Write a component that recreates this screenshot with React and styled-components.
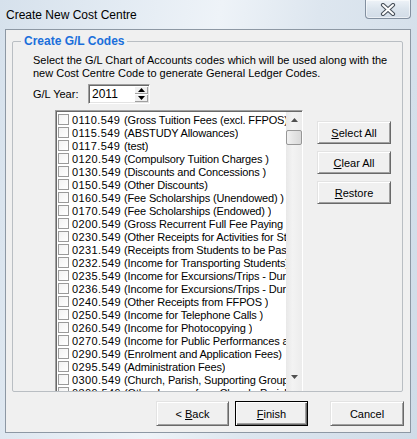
import React from 'react';
import styled, { createGlobalStyle } from 'styled-components';

const Global = createGlobalStyle`
  html, body { margin: 0; padding: 0; }
  body { width: 417px; height: 439px; overflow: hidden; background: #dfe7ef; }
`;

const Window = styled.div`
  width: 417px;
  height: 439px;
  box-sizing: border-box;
  padding: 0 6px 6px 5px;
  display: flex;
  flex-direction: column;
  background: linear-gradient(100deg, #d6e1ec 0%, #e3ebf3 25%, #eef3f8 45%, #dde6ef 65%, #d0dce8 100%);
  font-family: "Liberation Sans", Arial, sans-serif;
`;

const TitleBar = styled.div`
  height: 29px;
  flex: none;
  display: flex;
  align-items: flex-start;
`;

const Title = styled.div`
  margin: 7px 0 0 1px;
  font: 12px/16px "Liberation Sans", Arial, sans-serif;
  color: #000;
`;

const CloseButton = styled.div`
  margin-left: auto;
  width: 46px;
  height: 19px;
  box-sizing: border-box;
  border: 1px solid #8390a0;
  border-top: none;
  border-radius: 0 0 4px 4px;
  background: linear-gradient(#eef3f8, #dbe4ed 50%, #d2dce7);
  box-shadow: inset 0 0 0 1px rgba(255, 255, 255, 0.55);
  display: flex;
  align-items: center;
  justify-content: center;
`;

const Client = styled.div`
  flex: 1;
  min-height: 0;
  display: flex;
  flex-direction: column;
  background: #f0f0f0;
  border: 1px solid #8d98a4;
`;

const Group = styled.section`
  position: relative;
  flex: none;
  margin: 11px 0 0 6px;
  width: 391px;
  height: 351px;
  box-sizing: border-box;
  border: 1px solid #b9bec3;
  border-radius: 2px;
  display: flex;
  flex-direction: column;
`;

const Legend = styled.h2`
  position: absolute;
  top: -8px;
  left: 8px;
  margin: 0;
  padding: 0 3px;
  background: #f0f0f0;
  font: bold 12px/14px "Liberation Sans", Arial, sans-serif;
  color: #1b6fdb;
`;

const GroupBody = styled.div`
  flex: 1;
  min-height: 0;
  display: flex;
  flex-direction: column;
  padding: 12px 0 0 20px;
  overflow: hidden;
`;

const Description = styled.div`
  font-size: 11px;
  line-height: 13px;
  color: #000;
`;

const YearRow = styled.div`
  display: flex;
  align-items: center;
  margin-top: 4px;
  height: 20px;
  font-size: 11px;
`;

const YearLabel = styled.span`
  width: 55px;
`;

const Spin = styled.div`
  width: 62px;
  height: 20px;
  box-sizing: border-box;
  display: flex;
  background: #fff;
  border: 1px solid;
  border-color: #a0a0a0 #fff #fff #a0a0a0;
  box-shadow: inset 1px 1px #696969, inset -1px -1px #e3e3e3;
`;

const SpinValue = styled.span`
  flex: 1;
  padding: 3px 0 0 3px;
  font-size: 12px;
  line-height: 13px;
`;

const SpinButtons = styled.div`
  width: 14px;
  margin: 1px 1px 1px 0;
  display: flex;
  flex-direction: column;
`;

const SpinArrow = styled.div`
  flex: 1;
  display: flex;
  align-items: center;
  justify-content: center;
  background: #f0f0f0;
  box-shadow: inset 1px 1px #fff, inset -1px -1px #a0a0a0;
`;

const ListRow = styled.div`
  flex: 1;
  min-height: 0;
  display: flex;
  margin-top: 6px;
`;

const ListBox = styled.div`
  width: 248px;
  margin-left: 22px;
  box-sizing: border-box;
  display: flex;
  background: #fff;
  border: 1px solid;
  border-color: #a0a0a0 #fff transparent #a0a0a0;
  border-bottom: none;
  padding: 1px 0 0 1px;
  box-shadow: inset 1px 1px #696969;
  overflow: hidden;
`;

const Items = styled.div`
  flex: 1;
  min-width: 0;
  padding: 1px 0 0 1px;
  overflow: hidden;
`;

const Item = styled.div`
  height: 13px;
  display: flex;
  align-items: center;
  white-space: nowrap;
  font-size: 11px;
  color: #000;
`;

const Check = styled.span`
  flex: none;
  width: 11px;
  height: 11px;
  box-sizing: border-box;
  margin-right: 3px;
  border: 1px solid #9a9a9a;
  background: linear-gradient(135deg, #f2f2f2, #fff);
`;

const Code = styled.span`
  flex: none;
  width: 52px;
  letter-spacing: 0.4px;
`;

const Desc = styled.span`
  overflow: hidden;
  letter-spacing: -0.15px;
`;

const ScrollBar = styled.div`
  flex: none;
  width: 16px;
  display: flex;
  flex-direction: column;
  padding-bottom: 5px;
  background: linear-gradient(to right, #e8e8e8, #f3f3f3 40%, #ececec);
`;

const ScrollArrow = styled.div`
  height: 17px;
  flex: none;
  display: flex;
  align-items: center;
  justify-content: center;
`;

const Thumb = styled.div`
  height: 15px;
  margin: 1px 0 0 0;
  box-sizing: border-box;
  border: 1px solid #979797;
  border-radius: 2px;
  background: linear-gradient(to right, #f1f1f1, #e4e4e4 50%, #d9d9d9);
`;

const Track = styled.div`
  flex: 1;
`;

const SideButtons = styled.div`
  display: flex;
  flex-direction: column;
  gap: 7px;
  margin: 11px 0 0 14px;
`;

const Button = styled.button`
  width: ${p => p.$w || 74}px;
  height: ${p => p.$h || 23}px;
  box-sizing: border-box;
  padding: 0;
  font: 11px "Liberation Sans", Arial, sans-serif;
  color: #000;
  background: #f0f0f0;
  border: 1px solid;
  border-color: ${p => (p.$default ? '#000' : '#e3e3e3 #696969 #696969 #e3e3e3')};
  box-shadow: ${p =>
    p.$default
      ? 'inset 1px 1px #fff, inset -1px -1px #696969, inset -2px -2px #a0a0a0'
      : 'inset 1px 1px #fff, inset -1px -1px #a0a0a0'};
  u { text-decoration: underline; }
`;

const Footer = styled.div`
  display: flex;
  justify-content: flex-end;
  margin: 9px 6px 0 0;
`;

const FooterGap = styled.span`
  width: ${p => p.$w}px;
`;

const accounts = [
  ['0110.549', '(Gross Tuition Fees (excl. FFPOS)'],
  ['0115.549', '(ABSTUDY Allowances)'],
  ['0117.549', '(test)'],
  ['0120.549', '(Compulsory Tuition Charges )'],
  ['0130.549', '(Discounts and Concessions  )'],
  ['0150.549', '(Other Discounts)'],
  ['0160.549', '(Fee Scholarships (Unendowed)  )'],
  ['0170.549', '(Fee Scholarships (Endowed) )'],
  ['0200.549', '(Gross Recurrent Full Fee Paying Students)'],
  ['0230.549', '(Other Receipts for Activities for Students)'],
  ['0231.549', '(Receipts from Students to be Passed On)'],
  ['0232.549', '(Income for Transporting Students)'],
  ['0235.549', '(Income for Excursions/Trips - During Term)'],
  ['0236.549', '(Income for Excursions/Trips - During Holidays)'],
  ['0240.549', '(Other Receipts from FFPOS )'],
  ['0250.549', '(Income for Telephone Calls )'],
  ['0260.549', '(Income for Photocopying )'],
  ['0270.549', '(Income for Public Performances and Events)'],
  ['0290.549', '(Enrolment and Application Fees)'],
  ['0295.549', '(Administration Fees)'],
  ['0300.549', '(Church, Parish, Supporting Groups)'],
  ['0309.549', '(Other Income from Church, Parish)'],
];

const Tri = ({ up, size = 7, color = '#000' }) => {
  const h = Math.ceil(size / 2);
  return (
    <svg width={size} height={h + 1} viewBox={`0 0 ${size} ${h + 1}`}>
      {up ? (
        <polygon points={`0,${h} ${size / 2},0 ${size},${h}`} fill={color} />
      ) : (
        <polygon points={`0,0 ${size / 2},${h} ${size},0`} fill={color} />
      )}
    </svg>
  );
};

const CloseX = () => (
  <svg width="16" height="13" viewBox="0 0 16 13">
    <path d="M3 2 L13 11 M13 2 L3 11" stroke="#4a525c" strokeWidth="4.2" strokeLinecap="round" />
    <path d="M3 2 L13 11 M13 2 L3 11" stroke="#fff" strokeWidth="2" strokeLinecap="round" />
  </svg>
);

export default function App() {
  return (
    <>
      <Global />
      <Window>
        <TitleBar>
          <Title>Create New Cost Centre</Title>
          <CloseButton>
            <CloseX />
          </CloseButton>
        </TitleBar>
        <Client>
          <Group>
            <Legend>Create G/L Codes</Legend>
            <GroupBody>
              <Description>
                Select the G/L Chart of Accounts codes which will be used along with the
                <br />
                new Cost Centre Code to generate General Ledger Codes.
              </Description>
              <YearRow>
                <YearLabel>G/L Year:</YearLabel>
                <Spin>
                  <SpinValue>2011</SpinValue>
                  <SpinButtons>
                    <SpinArrow>
                      <Tri up size={7} />
                    </SpinArrow>
                    <SpinArrow>
                      <Tri size={7} />
                    </SpinArrow>
                  </SpinButtons>
                </Spin>
              </YearRow>
              <ListRow>
                <ListBox>
                  <Items>
                    {accounts.map(([code, desc]) => (
                      <Item key={code}>
                        <Check />
                        <Code>{code}</Code>
                        <Desc>{desc}</Desc>
                      </Item>
                    ))}
                  </Items>
                  <ScrollBar>
                    <ScrollArrow>
                      <Tri up size={7} color="#505050" />
                    </ScrollArrow>
                    <Thumb />
                    <Track />
                    <ScrollArrow>
                      <Tri size={7} color="#505050" />
                    </ScrollArrow>
                  </ScrollBar>
                </ListBox>
                <SideButtons>
                  <Button>
                    <u>S</u>elect All
                  </Button>
                  <Button>
                    <u>C</u>lear All
                  </Button>
                  <Button>
                    <u>R</u>estore
                  </Button>
                </SideButtons>
              </ListRow>
            </GroupBody>
          </Group>
          <Footer>
            <Button $w={73} $h={25}>
              &lt; <u>B</u>ack
            </Button>
            <FooterGap $w={6} />
            <Button $w={73} $h={25} $default>
              <u>F</u>inish
            </Button>
            <FooterGap $w={22} />
            <Button $w={74} $h={25}>
              Cancel
            </Button>
          </Footer>
        </Client>
      </Window>
    </>
  );
}
